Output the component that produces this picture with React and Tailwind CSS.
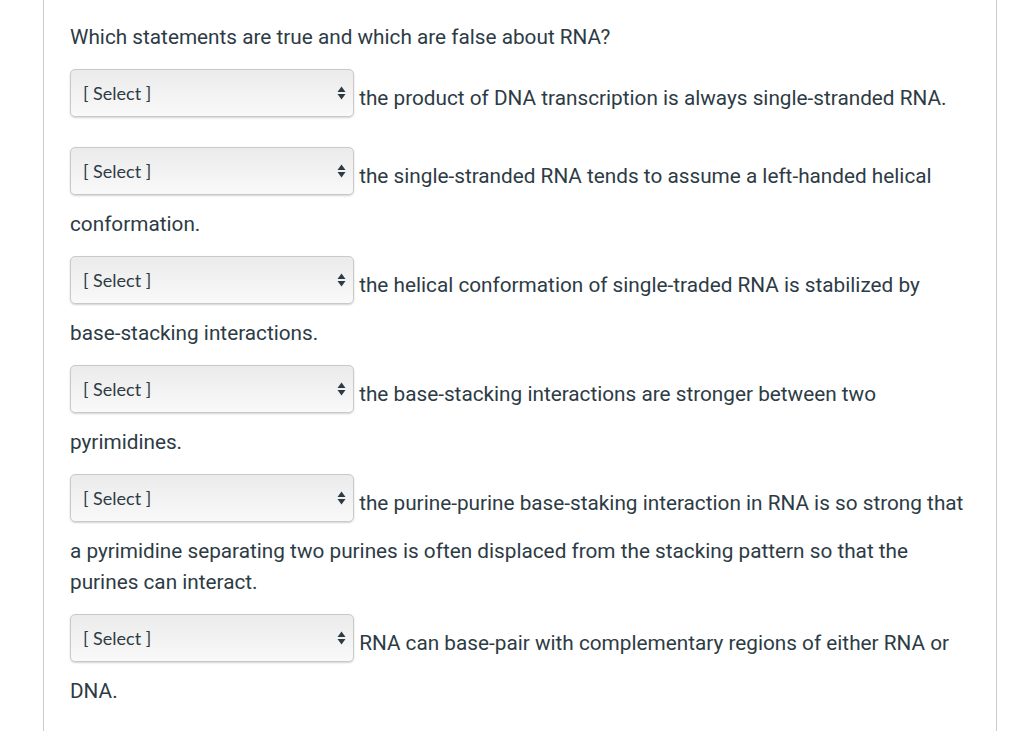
import React from "react";

const rows = [
  "the product of DNA transcription is always single-stranded RNA.",
  "the single-stranded RNA tends to assume a left-handed helical conformation.",
  "the helical conformation of single-traded RNA is stabilized by base-stacking interactions.",
  "the base-stacking interactions are stronger between two pyrimidines.",
  "the purine-purine base-staking interaction in RNA is so strong that a pyrimidine separating two purines is often displaced from the stacking pattern so that the purines can interact.",
  "RNA can base-pair with complementary regions of either RNA or DNA.",
];

function FakeSelect() {
  return (
    <span className="relative inline-block h-[48px] w-[284px] mb-[14px] rounded-[5px] border border-[#c9c9c9] bg-gradient-to-b from-[#ebebeb] to-[#f9f9f9] shadow-[0_1px_2px_rgba(0,0,0,0.18)] align-[5px] font-['Lato',sans-serif] text-[18px] leading-[46px] text-[#2d3b45]">
      <span className="pl-[12px]">[ Select ]</span>
      <svg
        className="absolute right-[7px] top-[16px]"
        width="9"
        height="14"
        viewBox="0 0 9 14"
      >
        <path d="M4.5 0.5 L8.5 6 L0.5 6 Z" fill="#2d3b45" />
        <path d="M0.5 8 L8.5 8 L4.5 13.5 Z" fill="#2d3b45" />
      </svg>
    </span>
  );
}

export default function App() {
  return (
    <div className="min-h-[731px] bg-white font-['Roboto',sans-serif] text-[#2d3b45]">
      <div className="ml-[43px] min-h-[731px] w-[954px] border-x border-[#c7cdd1] px-[26px] pt-[22px] text-[20.75px] leading-[31px]">
        <p className="mb-[16px]">Which statements are true and which are false about RNA?</p>
        {rows.map((t, i) => (
          <p key={i} className="mb-[16px]">
            <FakeSelect /> {t}
          </p>
        ))}
      </div>
    </div>
  );
}
